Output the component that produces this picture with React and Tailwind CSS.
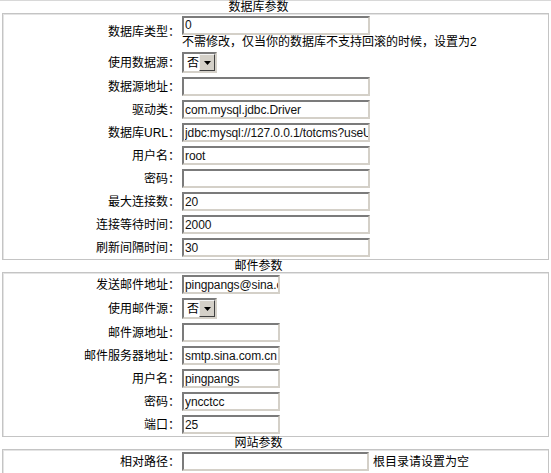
import React from 'react';

const cjk = { fontFamily: '"Liberation Sans", "Noto Sans CJK SC", sans-serif' };

const inputCls =
  'h-[19px] border-2 border-t-[#7b7b7b] border-l-[#7b7b7b] border-b-[#d4d0c8] border-r-[#d4d0c8] bg-white pl-[1px] pr-0 text-[12px] leading-[15px] tracking-[-0.1px] text-[#111] outline-none';

const Select = () => (
  <div className="flex h-[21px] w-[35px] border-2 border-t-[#7b7b7b] border-l-[#7b7b7b] border-b-[#d4d0c8] border-r-[#d4d0c8] bg-white">
    <div className="flex flex-1 items-center pl-[3px] text-[12px] leading-none">否</div>
    <div className="flex w-[16px] items-center justify-center border border-t-[#f4f4f4] border-l-[#f4f4f4] border-b-[#404040] border-r-[#404040] bg-[#d4d0c8]">
      <svg width="7" height="4" viewBox="0 0 7 4">
        <path d="M0 0h7L3.5 4z" fill="#000" />
      </svg>
    </div>
  </div>
);

const Row = ({ label, h = 'h-[23px]', children }) => (
  <div className={`flex items-center ${h}`}>
    <div className="w-[177px] shrink-0 text-right text-[12px] leading-[14px]">{label}</div>
    <div className="ml-[2px] flex items-center">{children}</div>
  </div>
);

const Field = ({ value = '', w }) => (
  <input readOnly value={value} className={`${inputCls} ${w}`} style={cjk} />
);

const Title = ({ children }) => (
  <div className="flex h-[12px] items-center justify-center pr-[34px] text-[12px] leading-none">{children}</div>
);

const Box = ({ children }) => (
  <div className="mx-[2px] border border-[#c4c4c4] shadow-[inset_1px_1px_0_#e4e4e4]">{children}</div>
);

const dbRows = [
  ['数据源地址：', ''],
  ['驱动类：', 'com.mysql.jdbc.Driver'],
  ['数据库URL：', 'jdbc:mysql://127.0.0.1/totcms?useUnicode=true'],
  ['用户名：', 'root'],
  ['密码：', ''],
  ['最大连接数：', '20'],
  ['连接等待时间：', '2000'],
  ['刷新间隔时间：', '30'],
];

const mailRows = [
  ['邮件源地址：', ''],
  ['邮件服务器地址：', 'smtp.sina.com.cn'],
  ['用户名：', 'pingpangs'],
  ['密码：', 'yncctcc'],
  ['端口：', '25'],
];

export default function App() {
  return (
    <div className="h-[473px] w-[551px] overflow-hidden bg-white text-black" style={cjk}>
      <div className="h-px bg-[#d8d8d8]" />

      {/* 数据库参数 */}
      <Title>数据库参数</Title>
      <Box>
        <Row label="数据库类型：" h="h-[36px]">
          <div className="flex flex-col">
            <Field value="0" w="w-[188px]" />
            <div className="text-[12px] leading-[14px]">不需修改，仅当你的数据库不支持回滚的时候，设置为2</div>
          </div>
        </Row>
        <Row label="使用数据源：" h="h-[25px]">
          <Select />
        </Row>
        {dbRows.map(([label, value]) => (
          <Row key={label} label={label}>
            <Field value={value} w="w-[188px]" />
          </Row>
        ))}
      </Box>

      {/* 邮件参数 */}
      <Title>邮件参数</Title>
      <Box>
        <Row label="发送邮件地址：">
          <Field value="pingpangs@sina.com" w="w-[98px]" />
        </Row>
        <Row label="使用邮件源：" h="h-[25px]">
          <Select />
        </Row>
        {mailRows.map(([label, value]) => (
          <Row key={label} label={label}>
            <Field value={value} w="w-[98px]" />
          </Row>
        ))}
      </Box>

      {/* 网站参数 */}
      <Title>网站参数</Title>
      <Box>
        <Row label="相对路径：">
          <Field value="" w="w-[187px]" />
          <span className="ml-[4px] text-[12px] leading-[14px]">根目录请设置为空</span>
        </Row>
      </Box>
    </div>
  );
}
